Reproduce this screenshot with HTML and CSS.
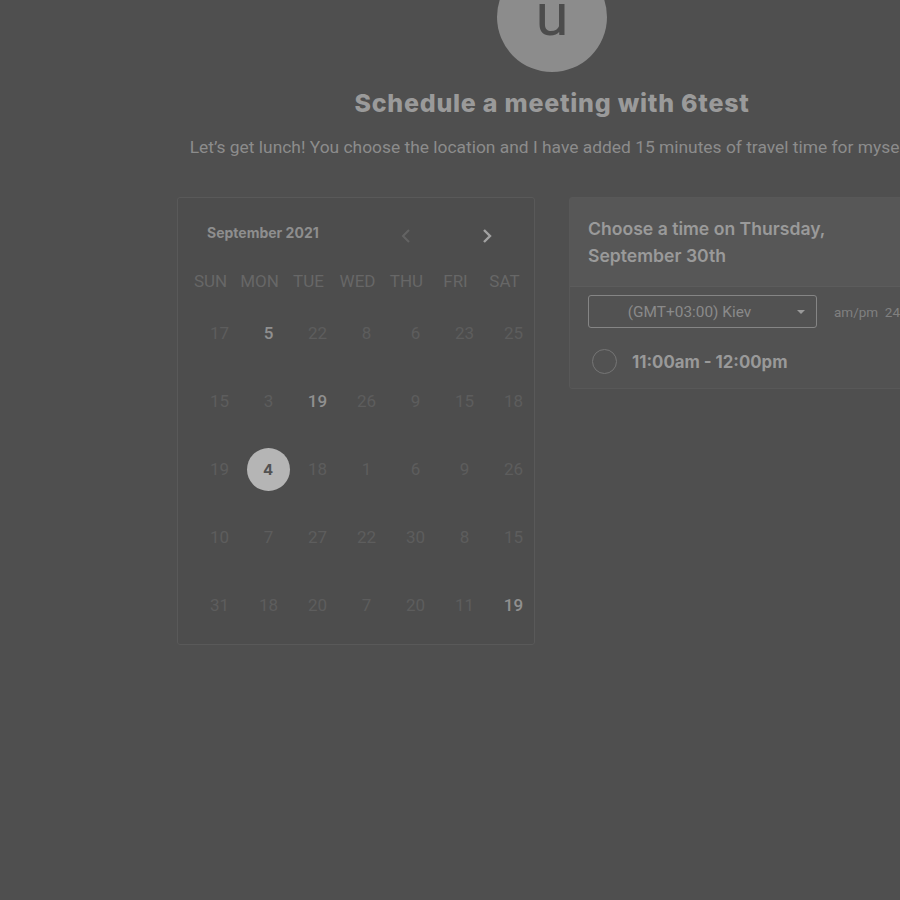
FILE: index.html
```html
<!DOCTYPE html>
<html>
<head>
<meta charset="utf-8">
<link rel="stylesheet" href="styles.css">
</head>
<body>
<div class="page">
  <div class="avatar">u</div>
  <h1 class="title">Schedule a meeting with 6test</h1>
  <p class="subtitle">Let’s get lunch! You choose the location and I have added 15 minutes of travel time for myself.</p>
  <div class="content">
    <div class="calendar">
      <div class="cal-head">
        <span class="month">September 2021</span>
        <span class="nav prev"><svg width="10" height="16" viewBox="0 0 10 16"><path d="M8 2 L2 8 L8 14" fill="none" stroke="currentColor" stroke-width="2"/></svg></span>
        <span class="nav next"><svg width="10" height="16" viewBox="0 0 10 16"><path d="M2 2 L8 8 L2 14" fill="none" stroke="currentColor" stroke-width="2.4"/></svg></span>
      </div>
      <div class="dow">
        <span>SUN</span><span>MON</span><span>TUE</span><span>WED</span><span>THU</span><span>FRI</span><span>SAT</span>
      </div>
      <div class="days">
        <span>17</span><span class="on">5</span><span>22</span><span>8</span><span>6</span><span>23</span><span>25</span>
        <span>15</span><span>3</span><span class="on">19</span><span>26</span><span>9</span><span>15</span><span>18</span>
        <span>19</span><span class="sel"><b>4</b></span><span>18</span><span>1</span><span>6</span><span>9</span><span>26</span>
        <span>10</span><span>7</span><span>27</span><span>22</span><span>30</span><span>8</span><span>15</span>
        <span>31</span><span>18</span><span>20</span><span>7</span><span>20</span><span>11</span><span class="on">19</span>
      </div>
    </div>
    <div class="times">
      <div class="times-head">Choose a time on Thursday,<br>September 30th</div>
      <div class="times-body">
        <div class="tz-row">
          <div class="select">(GMT+03:00) Kiev<span class="caret"></span></div>
          <div class="fmt">am/pm&nbsp; 24hr</div>
        </div>
        <div class="slot"><span class="radio"></span><span class="slot-text">11:00am - 12:00pm</span></div>
      </div>
    </div>
  </div>
</div>
</body>
</html>
```
FILE: styles.css
```css
html, body {
  margin: 0;
  padding: 0;
  background: #4f4f4f;
  overflow: hidden;
}
body {
  width: 900px;
  height: 900px;
}
.page {
  width: 1104px;
  display: flex;
  flex-direction: column;
  align-items: center;
}
.avatar {
  width: 110px;
  height: 110px;
  margin-top: -38px;
  border-radius: 50%;
  background: #8c8c8c;
  color: #4c4c4c;
  font-family: Roboto, "Liberation Sans", sans-serif;
  font-size: 60px;
  line-height: 70px;
  display: flex;
  justify-content: center;
  align-items: flex-end;
  padding-bottom: 22px;
  box-sizing: border-box;
}
.title {
  margin: 15px 0 0;
  font-family: Inter, "Liberation Sans", sans-serif;
  font-weight: 800;
  font-size: 25px;
  line-height: 32px;
  letter-spacing: 0.75px;
  color: #9a9a9a;
}
.subtitle {
  margin: 17px 0 0;
  font-family: Roboto, "Liberation Sans", sans-serif;
  font-size: 17.4px;
  line-height: 22px;
  color: #8c8c8c;
  white-space: nowrap;
}
.content {
  margin-top: 39px;
  display: flex;
  gap: 34px;
  align-items: flex-start;
}
.calendar {
  width: 358px;
  height: 448px;
  box-sizing: border-box;
  border: 1px solid #595959;
  border-radius: 3px;
  background: #4d4d4d;
}
.cal-head {
  display: flex;
  align-items: center;
  height: 22px;
  margin-top: 23px;
  padding-left: 29px;
}
.month {
  font-family: Inter, "Liberation Sans", sans-serif;
  font-weight: 700;
  font-size: 14px;
  color: #8e8e8e;
  width: 194px;
}
.nav {
  display: flex;
  margin-top: 8px;
}
.prev {
  color: #636363;
  width: 81px;
}
.next {
  color: #a2a2a2;
}
.dow {
  display: grid;
  grid-template-columns: repeat(7, 49px);
  margin-top: 28px;
  padding-left: 8px;
  font-family: Roboto, "Liberation Sans", sans-serif;
  font-size: 17px;
  line-height: 20px;
  color: #676767;
  text-align: center;
}
.days {
  display: grid;
  grid-template-columns: repeat(7, 49px);
  grid-auto-rows: 68px;
  margin-top: 8px;
  padding-left: 17px;
  font-family: Roboto, "Liberation Sans", sans-serif;
  font-size: 17px;
  color: #5d5d5d;
}
.days span {
  display: flex;
  align-items: center;
  justify-content: center;
}
.days .on {
  color: #909090;
  font-weight: 500;
}
.days .sel b {
  width: 43px;
  height: 43px;
  border-radius: 50%;
  background: #b5b5b5;
  color: #525252;
  font-family: Inter, "Liberation Sans", sans-serif;
  font-weight: 700;
  font-size: 15px;
  display: flex;
  align-items: center;
  justify-content: center;
  margin-right: 1px;
}
.times {
  width: 358px;
  box-sizing: border-box;
  border: 1px solid #585858;
  border-radius: 3px;
  background: #525252;
}
.times-head {
  padding: 17px 18px;
  background: #575757;
  border-bottom: 1px solid #5c5c5c;
  font-family: Inter, "Liberation Sans", sans-serif;
  font-weight: 600;
  font-size: 17.6px;
  line-height: 27px;
  color: #9a9a9a;
  white-space: nowrap;
}
.times-body {
  padding: 8px 18px 14px;
}
.tz-row {
  display: flex;
  align-items: center;
  gap: 17px;
}
.select {
  flex: 0 0 229px;
  height: 33px;
  box-sizing: border-box;
  border: 1px solid #858585;
  border-radius: 3px;
  display: flex;
  align-items: center;
  justify-content: center;
  position: relative;
  font-family: Roboto, "Liberation Sans", sans-serif;
  font-size: 15.4px;
  color: #8a8a8a;
  padding-right: 26px;
}
.caret {
  position: absolute;
  right: 11px;
  top: 14px;
  width: 0;
  height: 0;
  border-left: 4px solid transparent;
  border-right: 4px solid transparent;
  border-top: 4px solid #9a9a9a;
}
.fmt {
  font-family: Roboto, "Liberation Sans", sans-serif;
  font-size: 13.5px;
  color: #808080;
  white-space: nowrap;
}
.slot {
  margin-top: 21px;
  display: flex;
  align-items: center;
  gap: 15px;
  padding-left: 4px;
}
.radio {
  width: 25px;
  height: 25px;
  box-sizing: border-box;
  border: 1.5px solid #757575;
  border-radius: 50%;
}
.slot-text {
  font-family: Inter, "Liberation Sans", sans-serif;
  font-weight: 700;
  font-size: 16.8px;
  color: #999999;
}
```
